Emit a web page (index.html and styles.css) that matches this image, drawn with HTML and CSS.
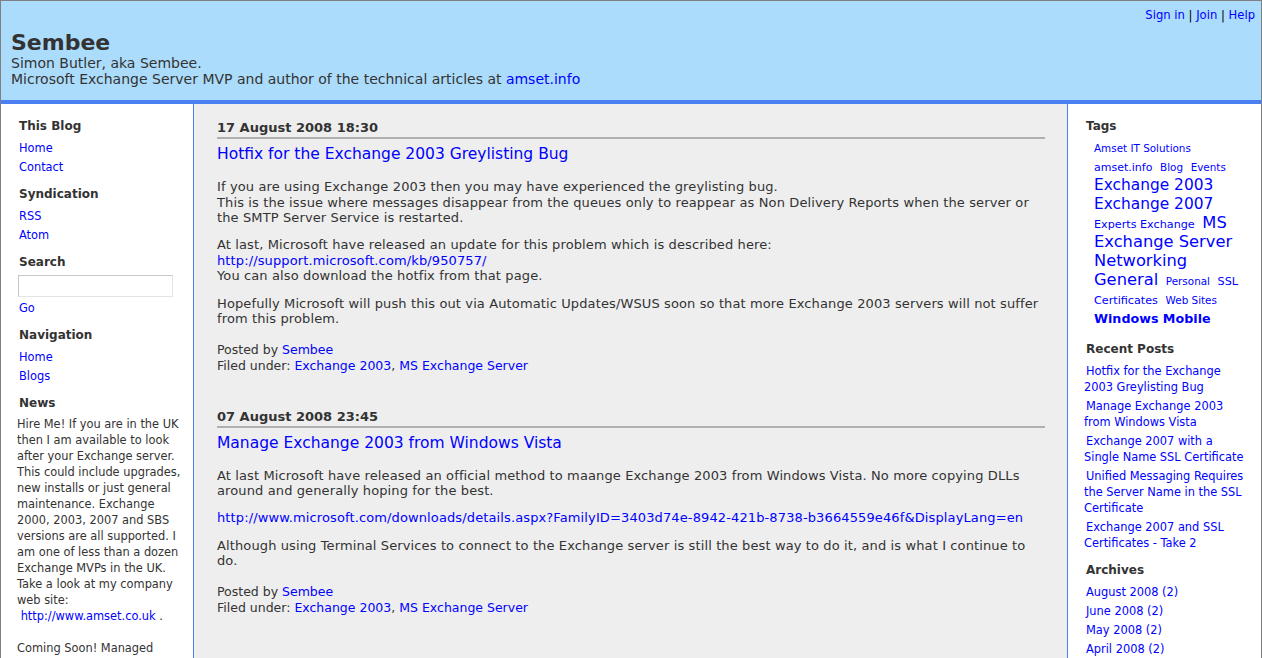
FILE: index.html
```html
<!DOCTYPE html>
<html>
<head>
<meta charset="utf-8">
<title>Sembee</title>
<link rel="stylesheet" href="styles.css">
</head>
<body>
<div class="page">
  <header class="header">
    <div class="userlinks"><a href="#">Sign in</a> | <a href="#">Join</a> | <a href="#">Help</a></div>
    <h1 class="site-title">Sembee</h1>
    <div class="site-desc">Simon Butler, aka Sembee.<br>Microsoft Exchange Server MVP and author of the technical articles at <a href="#">amset.info</a></div>
  </header>
  <div class="columns">
    <aside class="left">
      <h3 class="side-h">This Blog</h3>
      <ul class="side-list">
        <li><a href="#">Home</a></li>
        <li><a href="#">Contact</a></li>
      </ul>
      <h3 class="side-h">Syndication</h3>
      <ul class="side-list">
        <li><a href="#">RSS</a></li>
        <li><a href="#">Atom</a></li>
      </ul>
      <h3 class="side-h">Search</h3>
      <div class="search">
        <input class="search-box" type="text">
        <a class="go" href="#">Go</a>
      </div>
      <h3 class="side-h">Navigation</h3>
      <ul class="side-list">
        <li><a href="#">Home</a></li>
        <li><a href="#">Blogs</a></li>
      </ul>
      <h3 class="side-h">News</h3>
      <div class="news">Hire Me! If you are in the UK then I am available to look after your Exchange server. This could include upgrades, new installs or just general maintenance. Exchange 2000, 2003, 2007 and SBS versions are all supported. I am one of less than a dozen Exchange MVPs in the UK. Take a look at my company web site:<br>&nbsp;<a href="#">http://www.amset.co.uk</a> .<br><br>Coming Soon! Managed</div>
    </aside>
    <main class="main">
      <article class="post">
        <h3 class="post-date">17 August 2008 18:30</h3>
        <h2 class="post-title"><a href="#">Hotfix for the Exchange 2003 Greylisting Bug</a></h2>
        <div class="post-body">
          <p>If you are using Exchange 2003 then you may have experienced the greylisting bug.<br>This is the issue where messages disappear from the queues only to reappear as Non Delivery Reports when the server or the SMTP Server Service is restarted.</p>
          <p>At last, Microsoft have released an update for this problem which is described here:<br><a href="#">http://support.microsoft.com/kb/950757/</a><br>You can also download the hotfix from that page.</p>
          <p>Hopefully Microsoft will push this out via Automatic Updates/WSUS soon so that more Exchange 2003 servers will not suffer from this problem.</p>
        </div>
        <div class="post-foot">Posted by <a href="#">Sembee</a><br>Filed under: <a href="#">Exchange 2003</a>, <a href="#">MS Exchange Server</a></div>
      </article>
      <article class="post">
        <h3 class="post-date">07 August 2008 23:45</h3>
        <h2 class="post-title"><a href="#">Manage Exchange 2003 from Windows Vista</a></h2>
        <div class="post-body">
          <p>At last Microsoft have released an official method to maange Exchange 2003 from Windows Vista. No more copying DLLs around and generally hoping for the best.</p>
          <p class="nowrap"><a href="#">http://www.microsoft.com/downloads/details.aspx?FamilyID=3403d74e-8942-421b-8738-b3664559e46f&amp;DisplayLang=en</a></p>
          <p>Although using Terminal Services to connect to the Exchange server is still the best way to do it, and is what I continue to do.</p>
        </div>
        <div class="post-foot">Posted by <a href="#">Sembee</a><br>Filed under: <a href="#">Exchange 2003</a>, <a href="#">MS Exchange Server</a></div>
      </article>
    </main>
    <aside class="right">
      <h3 class="side-h">Tags</h3>
      <div class="tags">
        <a class="t1" href="#">Amset IT Solutions</a>
        <a class="t2" href="#">amset.info</a> <a class="t1" href="#">Blog</a> <a class="t1" href="#">Events</a>
        <a class="t3" href="#">Exchange 2003</a>
        <a class="t3" href="#">Exchange 2007</a>
        <a class="t1b" href="#">Experts Exchange</a> <a class="t5" href="#">MS Exchange Server</a>
        <a class="t5" href="#">Networking General</a> <a class="t1" href="#">Personal</a> <a class="t1b" href="#">SSL Certificates</a> <a class="t1" href="#">Web Sites</a>
        <a class="t4" href="#">Windows Mobile</a>
      </div>
      <h3 class="side-h">Recent Posts</h3>
      <ul class="recent">
        <li><a href="#">Hotfix for the Exchange 2003 Greylisting Bug</a></li>
        <li><a href="#">Manage Exchange 2003 from Windows Vista</a></li>
        <li><a href="#">Exchange 2007 with a Single Name SSL Certificate</a></li>
        <li><a href="#">Unified Messaging Requires the Server Name in the SSL Certificate</a></li>
        <li><a href="#">Exchange 2007 and SSL Certificates - Take 2</a></li>
      </ul>
      <h3 class="side-h">Archives</h3>
      <ul class="side-list archives">
        <li><a href="#">August 2008 (2)</a></li>
        <li><a href="#">June 2008 (2)</a></li>
        <li><a href="#">May 2008 (2)</a></li>
        <li><a href="#">April 2008 (2)</a></li>
      </ul>
    </aside>
  </div>
</div>
</body>
</html>
```
FILE: styles.css
```css
html, body {
  margin: 0;
  padding: 0;
  background: #ffffff;
}
body {
  font-family: "DejaVu Sans", Verdana, sans-serif;
  font-size: 13px;
  color: #333333;
  overflow: hidden;
}
a {
  color: #0000ff;
  text-decoration: none;
}
.page {
  border-top: 1px solid #808080;
  border-left: 1px solid #808080;
  border-right: 1px solid #808080;
  min-height: 657px;
  box-sizing: border-box;
}
.header {
  background: #acdcfb;
  height: 99px;
  border-bottom: 4px solid #4a80f2;
  padding: 0 6px 0 10px;
}
.userlinks {
  text-align: right;
  font-size: 11.6px;
  padding-top: 7px;
  height: 14px;
  line-height: 14px;
  color: #000;
}
.site-title {
  margin: 9px 0 0;
  font-size: 22px;
  line-height: 24px;
  font-weight: bold;
  color: #333;
}
.site-desc {
  font-size: 14px;
  line-height: 16px;
  color: #333;
}
.columns {
  display: flex;
  align-items: stretch;
  min-height: 553px;
}
.left {
  width: 176px;
  flex: none;
  padding: 12px 0 0 16px;
  border-right: 1px solid #4a80f2;
  background: #fff;
  font-size: 11.4px;
}
.main {
  flex: 1;
  background: #eeeeee;
  padding: 14px 22px 0 23px;
  border-right: 1px solid #4a80f2;
  min-width: 0;
}
.right {
  width: 162px;
  flex: none;
  padding: 12px 15px 0 16px;
  background: #fff;
  font-size: 11.4px;
}
.side-h {
  font-size: 12px;
  font-weight: bold;
  line-height: 20px;
  margin: 0 0 3px 2px;
  color: #333;
}
.side-list {
  list-style: none;
  margin: 0 0 7px 2px;
  padding: 0;
}
.side-list li {
  line-height: 19px;
}
.search {
  margin: 2px 0 7px 0;
}
.search-box {
  display: block;
  width: 155px;
  height: 22px;
  box-sizing: border-box;
  border: 1px solid #c8c8c8;
  border-right-color: #e4e4e4;
  border-bottom-color: #e4e4e4;
  margin: 0 0 2px 1px;
  padding: 0;
  background: #fff;
}
.go {
  display: block;
  line-height: 19px;
  margin-left: 2px;
}
.news {
  line-height: 16px;
  margin-top: 1px;
  padding-right: 10px;
}
.post {
  margin-bottom: 33px;
}
.post-date {
  font-size: 13px;
  font-weight: bold;
  margin: 0;
  line-height: 18px;
  padding-top: 1px;
  border-bottom: 2px solid #b0b0b0;
  color: #333;
}
.post-title {
  font-size: 15.5px;
  font-weight: normal;
  margin: 5px 0 15px;
  line-height: 20px;
}
.post-title a {
  color: #0000ff;
}
.post-body p {
  margin: 0 0 11.5px;
  line-height: 15.6px;
  letter-spacing: 0.12px;
}
.nowrap {
  white-space: nowrap;
}
.post-foot {
  margin-top: 15px;
  line-height: 16px;
  font-size: 12.5px;
}
.tags {
  margin: 3px 0 10px 10px;
  width: 146px;
  line-height: 19px;
}
.tags a {
  margin-right: 4px;
  line-height: 16px;
}
.t1 { font-size: 10.4px; }
.t1b { font-size: 11.2px; }
.t2 { font-size: 11px; }
.t3 { font-size: 15.4px; }
.t5 { font-size: 16.3px; }
.t4 { font-size: 12.7px; font-weight: bold; }
.recent {
  list-style: none;
  margin: 4px 0 9px 0;
  padding: 0;
}
.recent li {
  line-height: 16px;
  margin-bottom: 3px;
  text-indent: 2px;
}
.archives {
  margin-left: 2px;
}
```
